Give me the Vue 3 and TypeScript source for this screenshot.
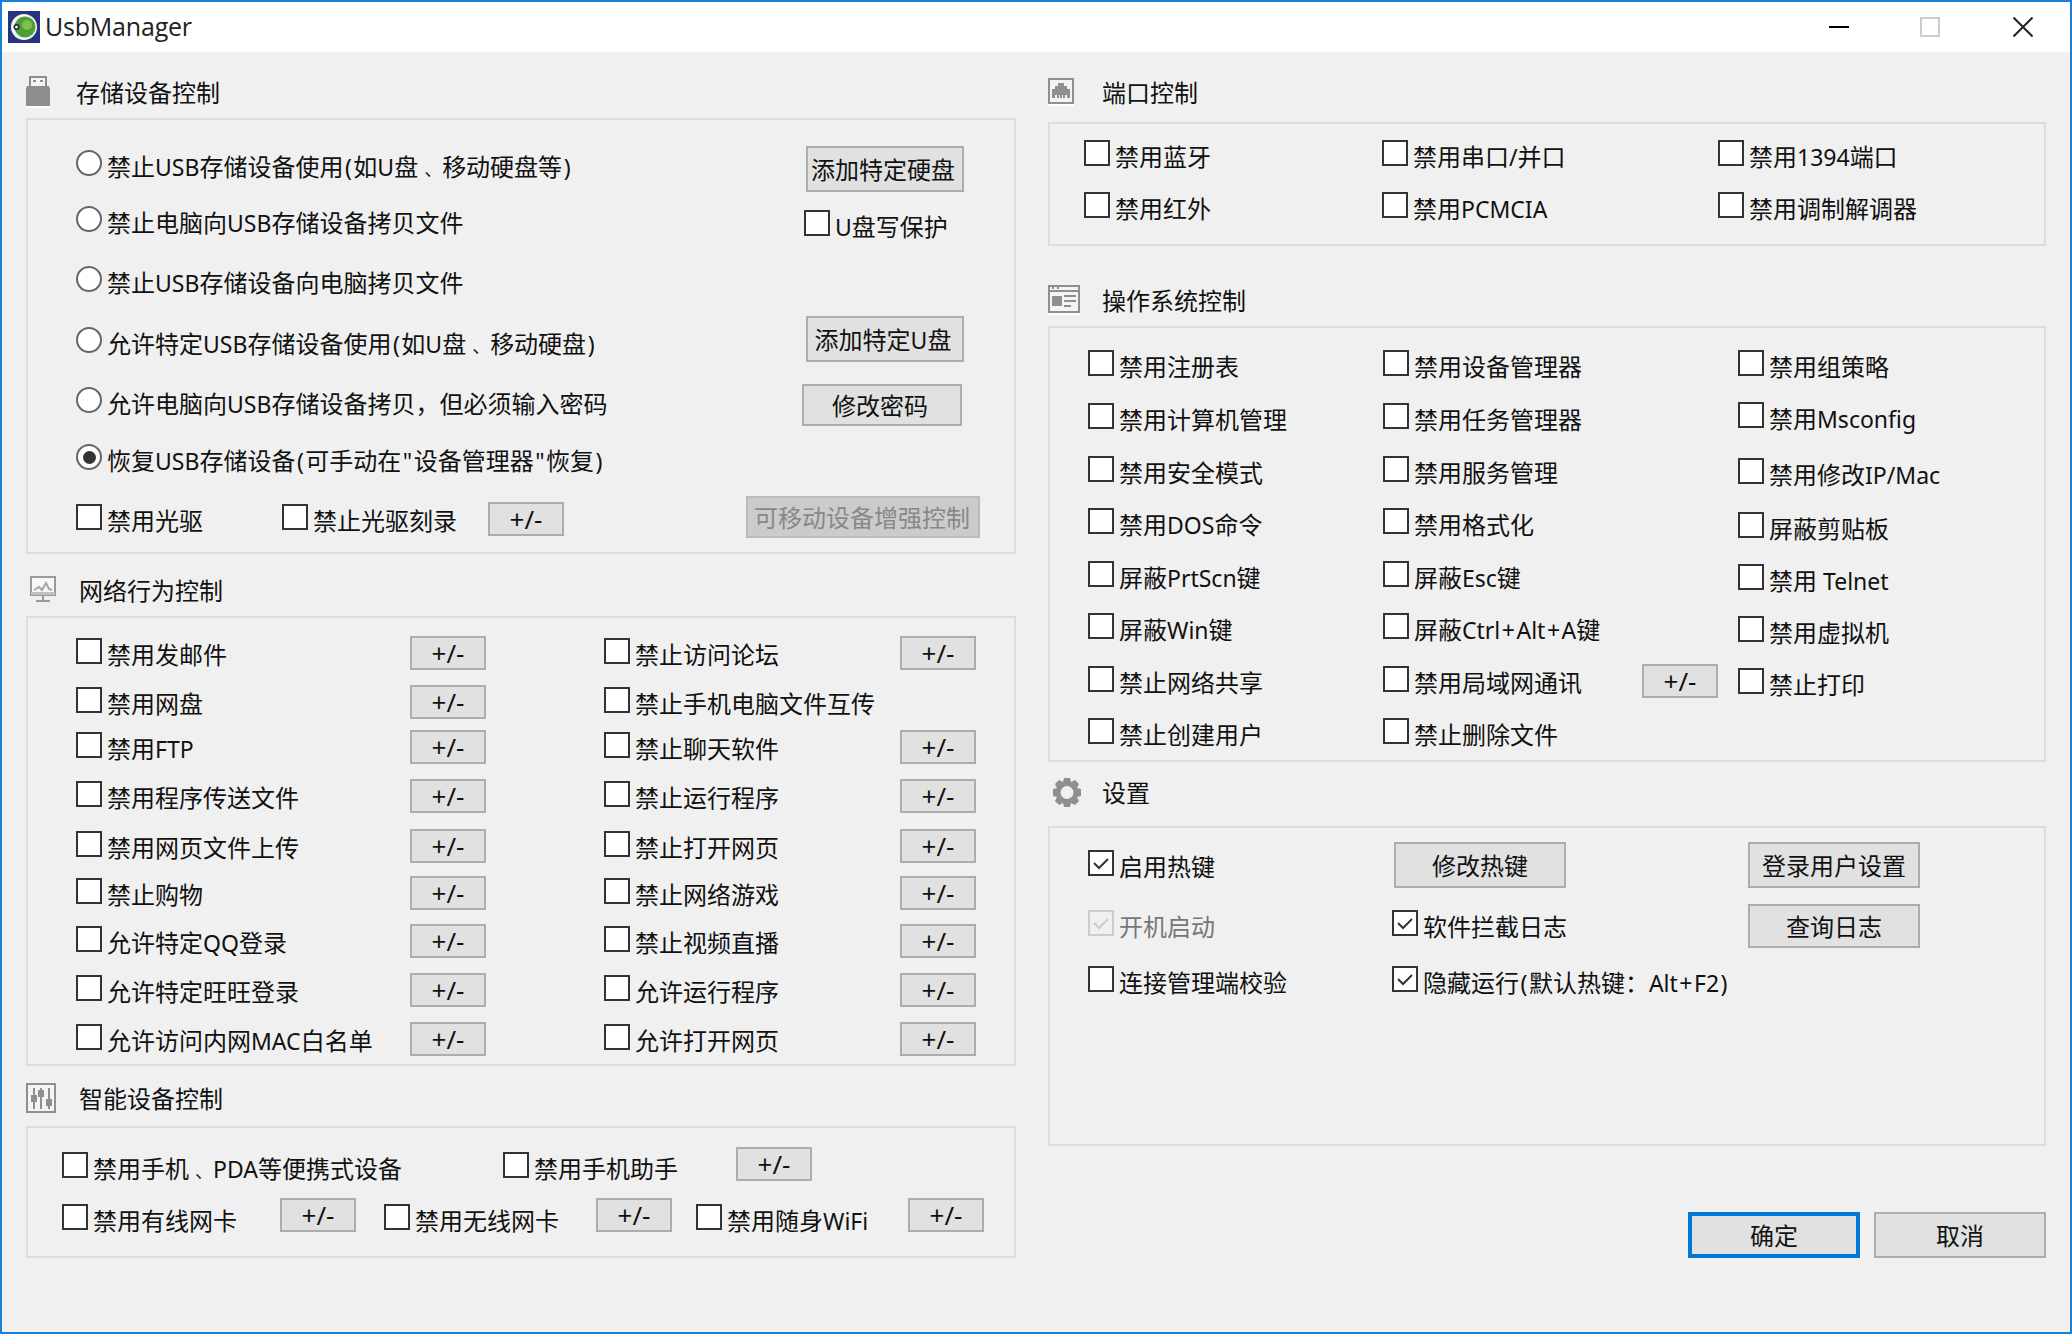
<script setup lang="ts">
interface Item {
  k: 'c' | 'r' | 'b' | 's'
  t?: string
  on?: boolean
  off?: boolean
  cls?: string
}
interface Group {
  cls: string
  items: Item[]
}
interface Section {
  id: string
  icon: string
  title: string
  groups: Group[]
}

const c = (t: string, cls = '', on = false, off = false): Item => ({ k: 'c', t, cls, on, off })
const r = (t: string, on = false): Item => ({ k: 'r', t, on })
const b = (t: string, cls = ''): Item => ({ k: 'b', t, cls })
const pm = (cls = ''): Item => b('+/-', 'pm ' + cls)
const s: Item = { k: 's' }

const pair = (x: string, y: string, rightBtn = true): Item[] => [c(x), pm(), c(y), rightBtn ? pm() : s]

const leftSections: Section[] = [
  {
    id: 'storage',
    icon: 'usb',
    title: '存储设备控制',
    groups: [
      {
        cls: 'radios',
        items: [
          r('禁止USB存储设备使用(如U盘、移动硬盘等)'),
          r('禁止电脑向USB存储设备拷贝文件'),
          r('禁止USB存储设备向电脑拷贝文件'),
          r('允许特定USB存储设备使用(如U盘、移动硬盘)'),
          r('允许电脑向USB存储设备拷贝，但必须输入密码'),
          r('恢复USB存储设备(可手动在"设备管理器"恢复)', true),
        ],
      },
      {
        cls: 'side',
        items: [
          b('添加特定硬盘', 'w158 ml2 h46 pr4'),
          c('U盘写保护'),
          b('添加特定U盘', 'w158 ml2 h46 pr4'),
          b('修改密码', 'w160 mln2 h42 pr4'),
        ],
      },
      {
        cls: 'drive',
        items: [
          c('禁用光驱', 'mt8'),
          c('禁止光驱刻录', 'mt8'),
          pm('mt6'),
          b('可移动设备增强控制', 'dis'),
        ],
      },
    ],
  },
  {
    id: 'network',
    icon: 'monitor',
    title: '网络行为控制',
    groups: [
      {
        cls: 'net',
        items: [
          ...pair('禁用发邮件', '禁止访问论坛'),
          ...pair('禁用网盘', '禁止手机电脑文件互传', false),
          ...pair('禁用FTP', '禁止聊天软件'),
          ...pair('禁用程序传送文件', '禁止运行程序'),
          ...pair('禁用网页文件上传', '禁止打开网页'),
          ...pair('禁止购物', '禁止网络游戏'),
          ...pair('允许特定QQ登录', '禁止视频直播'),
          ...pair('允许特定旺旺登录', '允许运行程序'),
          ...pair('允许访问内网MAC白名单', '允许打开网页'),
        ],
      },
    ],
  },
  {
    id: 'smart',
    icon: 'sliders',
    title: '智能设备控制',
    groups: [
      {
        cls: 'smart1',
        items: [c('禁用手机、PDA等便携式设备', 'mt5'), c('禁用手机助手', 'mt5'), pm()],
      },
      {
        cls: 'smart2',
        items: [
          c('禁用有线网卡', 'mt6'),
          pm(),
          c('禁用无线网卡', 'mt6'),
          pm(),
          c('禁用随身WiFi', 'mt6'),
          pm(),
        ],
      },
    ],
  },
]

const rightSections: Section[] = [
  {
    id: 'port',
    icon: 'port',
    title: '端口控制',
    groups: [
      {
        cls: 'ports',
        items: [
          c('禁用蓝牙'),
          c('禁用串口/并口'),
          c('禁用1394端口'),
          c('禁用红外'),
          c('禁用PCMCIA'),
          c('禁用调制解调器'),
        ],
      },
    ],
  },
  {
    id: 'os',
    icon: 'window',
    title: '操作系统控制',
    groups: [
      {
        cls: 'os1',
        items: ['禁用注册表', '禁用计算机管理', '禁用安全模式', '禁用DOS命令', '屏蔽PrtScn键', '屏蔽Win键', '禁止网络共享', '禁止创建用户'].map((t) => c(t)),
      },
      {
        cls: 'os2',
        items: [
          c('禁用设备管理器'), s,
          c('禁用任务管理器'), s,
          c('禁用服务管理'), s,
          c('禁用格式化'), s,
          c('屏蔽Esc键'), s,
          c('屏蔽Ctrl+Alt+A键'), s,
          c('禁用局域网通讯'), pm('up2'),
          c('禁止删除文件'), s,
        ],
      },
      {
        cls: 'os3',
        items: ['禁用组策略', '禁用Msconfig', '禁用修改IP/Mac', '屏蔽剪贴板', '禁用 Telnet', '禁用虚拟机', '禁止打印'].map((t) => c(t)),
      },
    ],
  },
  {
    id: 'settings',
    icon: 'gear',
    title: '设置',
    groups: [
      {
        cls: 'set',
        items: [
          c('启用热键', 'mt8', true),
          b('修改热键', 'w172 ml2 h46'),
          b('登录用户设置', 'w172 h46'),
          c('开机启动', 'mt6', true, true),
          c('软件拦截日志', 'mt6', true),
          b('查询日志', 'w172 h44'),
          c('连接管理端校验'),
          c('隐藏运行(默认热键：Alt+F2)', '', true),
        ],
      },
    ],
  },
]

const columns = [
  { id: 'left', sections: leftSections },
  { id: 'right', sections: rightSections },
]

// Latin runs are set in a smaller face than the CJK text around them;
// brackets, quotes, plus signs and the enumeration comma get their own spacing.
const segs = (text = '') =>
  (text.match(/[()"+]|、|[A-Za-z0-9\-/:. ]+|[^A-Za-z0-9\-/:.()"+ 、]+/g) ?? []).map((x) => ({
    x,
    cls: /^[()"+]/.test(x)
      ? 'lat par'
      : x === '、'
        ? 'dun'
        : /^[A-Za-z0-9\-/:. ]/.test(x)
          ? 'lat'
          : '',
  }))
</script>

<template>
  <div class="win">
    <header class="bar">
      <svg class="logo" viewBox="0 0 32 32">
        <rect width="32" height="32" fill="#27337f" />
        <circle cx="16" cy="16" r="13" fill="#f4f6f2" />
        <circle cx="17" cy="16" r="10.500" fill="#4f9e35" />
        <circle cx="19" cy="14" r="5" fill="#7cc04e" />
        <circle cx="8.500" cy="16" r="3" fill="#17232a" />
        <circle cx="8.500" cy="16" r="1.500" fill="#e8efe4" />
      </svg>
      <span class="title">UsbManager</span>
      <span class="ctl min"></span>
      <span class="ctl max"></span>
      <svg class="ctl close" viewBox="0 0 20 20"><path d="M.5.5l19 19M19.500.5l-19 19" stroke="#222" stroke-width="2" fill="none" /></svg>
    </header>

    <div class="content">
      <div v-for="col in columns" :key="col.id" :class="['col', col.id]">
        <section v-for="sec in col.sections" :key="sec.id" :class="sec.id">
          <div class="head">
            <span class="slot">
              <svg v-if="sec.icon === 'usb'" width="24" height="32" viewBox="0 0 24 32">
                <path d="M3 0h18v11H3z" fill="#8d8d8d" />
                <path d="M5 2h14v9H5z" fill="#f4f4f4" />
                <path d="M7 4h3v2H7zM14 4h3v2h-3z" fill="#8d8d8d" />
                <path d="M1 10h22l1 3v17H0V13z" fill="#8d8d8d" />
                <path d="M0 30h24v2H0z" fill="#fff" />
              </svg>
              <svg v-else-if="sec.icon === 'monitor'" width="26" height="28" viewBox="0 0 26 28">
                <path d="M1 1h24v18H1z" fill="#f7f7f7" stroke="#9a9a9a" stroke-width="2" />
                <path d="M4 14l5-3 3 3 4-7 3 6 3 1" fill="none" stroke="#a5a5a5" stroke-width="2" />
                <path d="M1 16h24v3H1z" fill="#c0c0c0" />
                <path d="M12 20h2v4h-2zM6 24h14v2H6z" fill="#9a9a9a" />
              </svg>
              <svg v-else-if="sec.icon === 'sliders'" width="30" height="30" viewBox="0 0 30 30">
                <path d="M1 1h28v28H1z" fill="#f4f4f4" stroke="#8f8f8f" stroke-width="2" />
                <path d="M7 5h2v21H7zM14 5h2v21h-2zM22 5h2v21h-2z" fill="#8f8f8f" />
                <path d="M5 12h6v7H5zM12 7h6v7h-6zM20 16h6v7h-6z" fill="#8f8f8f" />
              </svg>
              <svg v-else-if="sec.icon === 'port'" width="26" height="28" viewBox="0 0 26 28">
                <path d="M1 1h24v24H1z" fill="#f4f4f4" stroke="#8f8f8f" stroke-width="2" />
                <path d="M10 5h6v3h3v3h3v9H4v-9h3V8h3z" fill="#8f8f8f" />
                <path d="M7 17h2v3H7zM11 17h1v3h-1zM14 17h1v3h-1zM17 17h2v3h-2z" fill="#f4f4f4" />
                <path d="M0 26h26v2H0z" fill="#fff" />
              </svg>
              <svg v-else-if="sec.icon === 'window'" width="32" height="30" viewBox="0 0 32 30">
                <path d="M1 1h30v26H1z" fill="#f4f4f4" stroke="#8f8f8f" stroke-width="2" />
                <path d="M1 5h30v2H1zM4 2h2v2H4zM9 2h2v2H9z" fill="#8f8f8f" />
                <path d="M4 11h10v10H4zM16 10h12v2H16zM16 15h12v2H16zM16 20h7v2h-7z" fill="#8f8f8f" />
                <path d="M0 28h32v2H0z" fill="#fff" />
              </svg>
              <svg v-else width="30" height="31" viewBox="0 0 30 31">
                <path d="M12 1h6l1 4 4-2 4 4-2 4 4 1v7l-4 1 2 4-4 4-4-2-1 4h-6l-1-4-4 2-4-4 2-4-4-1v-7l4-1-2-4 4-4 4 2z" fill="#8f8f8f" />
                <circle cx="15" cy="15.500" r="6.500" fill="#f0f0f0" />
              </svg>
            </span>
            <span class="cap">{{ sec.title }}</span>
          </div>
          <div class="box">
            <div v-for="g in sec.groups" :key="g.cls" :class="g.cls">
              <template v-for="(it, i) in g.items" :key="i">
                <button v-if="it.k === 'b'" type="button" :class="['btn', it.cls]">
                  <span v-for="(p, j) in segs(it.t)" :key="j" :class="p.cls">{{ p.x }}</span>
                </button>
                <div v-else-if="it.k === 's'"></div>
                <div v-else :class="['ck', it.cls, { off: it.off }]">
                  <span v-if="it.k === 'r'" :class="['radio', { on: it.on }]"></span>
                  <span v-else class="cb">
                    <svg v-if="it.on" viewBox="0 0 22 22"><path d="M4 11l5 5 9-9" fill="none" stroke="currentColor" stroke-width="2" /></svg>
                  </span>
                  <span class="txt"><span v-for="(p, j) in segs(it.t)" :key="j" :class="p.cls">{{ p.x }}</span></span>
                </div>
              </template>
            </div>
          </div>
        </section>
        <footer v-if="col.id === 'right'" class="foot">
          <button type="button" class="btn w172 h46 ok">确定</button>
          <button type="button" class="btn w172 h46">取消</button>
        </footer>
      </div>
    </div>
  </div>
</template>

<style scoped>
.win {
  width: 2072px;
  height: 1334px;
  box-sizing: border-box;
  border: 2px solid #1a7fd8;
  background: #f0f0f0;
  font-family: "Noto Sans CJK SC", "Noto Sans", sans-serif;
  font-size: 24px;
  color: #111;
  overflow: hidden;
}
.bar {
  height: 50px;
  background: #fff;
  display: flex;
  align-items: center;
  padding-left: 6px;
}
.logo {
  width: 32px;
  height: 32px;
  margin-right: 5px;
}
.title {
  font-family: "Open Sans", sans-serif;
  font-size: 25px;
  line-height: 30px;
  padding-bottom: 2px;
  letter-spacing: -0.2px;
  color: #222;
  flex: 1;
}
.ctl {
  display: block;
  box-sizing: border-box;
  width: 20px;
  height: 20px;
}
.min {
  height: 2px;
  background: #000;
  margin-right: 71px;
}
.max {
  border: 2px solid #ccc;
  margin-right: 73px;
}
.close {
  margin-right: 37px;
}
.content {
  display: flex;
  gap: 32px;
  padding-left: 24px;
}
.left {
  width: 990px;
}
.right {
  width: 998px;
}
.head {
  display: flex;
  align-items: flex-start;
  box-sizing: border-box;
  line-height: 32px;
}
.slot {
  display: flex;
  align-items: center;
  height: 32px;
}
.cap {
  line-height: 32px;
}
.box {
  box-sizing: border-box;
  border: 2px solid #dcdcdc;
}
.storage .head { height: 66px; padding-top: 24px; }
.network .head { height: 62px; padding-top: 20px; }
.smart .head { height: 60px; padding-top: 16px; }
.port .head { height: 70px; padding-top: 24px; }
.os .head { height: 80px; padding-top: 38px; }
.settings .head { height: 64px; padding-top: 14px; }
.storage .slot { width: 50px; }
.network .slot { width: 53px; padding-left: 4px; box-sizing: border-box; }
.smart .slot { width: 53px; }
.port .slot, .os .slot { width: 54px; }
.settings .slot { width: 54px; padding-left: 4px; box-sizing: border-box; }

.storage .box { height: 436px; display: flex; flex-wrap: wrap; padding: 30px 0 0 48px; align-content: flex-start; }
.radios {
  width: 728px;
  display: grid;
  grid-template-rows: 56px 60px 61px 60px 57px 52px;
}
.side {
  width: 180px;
  height: 340px;
  margin-top: -4px;
  display: grid;
  grid-template-rows: 64px 106px 68px 42px;
}
.drive {
  width: 100%;
  display: grid;
  grid-template-columns: 206px 206px 258px auto;
}
.network .box { height: 450px; padding: 18px 0 0 48px; }
.net {
  display: grid;
  grid-template-columns: 334px 194px 296px 76px;
  grid-template-rows: 49px 45px 49px 50px 47px 48px 49px 49px 34px;
}
.net .ck { margin-top: 2px; }
.smart .box { height: 132px; padding: 19px 0 0 34px; }
.smart1 {
  display: grid;
  grid-template-columns: 441px 233px 76px;
  height: 51px;
}
.smart2 {
  display: grid;
  grid-template-columns: 218px 104px 212px 100px 212px 76px;
}
.port .box { height: 124px; padding: 16px 0 0 34px; }
.ports {
  display: grid;
  grid-template-columns: 298px 336px auto;
  grid-template-rows: 52px 52px;
}
.os .box { height: 436px; padding: 22px 0 0 38px; display: flex; }
.os1 { width: 295px; display: grid; grid-template-rows: 53px 53px 52px 53px 52px 53px 52px 36px; }
.os2 { width: 355px; display: grid; grid-template-columns: 259px 76px; grid-template-rows: 53px 53px 52px 53px 52px 53px 52px 36px; }
.os3 { display: grid; grid-template-rows: 52px 56px 54px 52px 52px 52px 36px; }
.settings .box { height: 320px; padding: 14px 0 0 38px; }
.set {
  display: grid;
  grid-template-columns: 304px 356px auto;
  grid-template-rows: 62px 62px 34px;
}
.foot {
  display: flex;
  justify-content: flex-end;
  gap: 14px;
  margin-top: 66px;
}

.ck {
  display: flex;
  align-items: flex-start;
  gap: 5px;
  height: 32px;
  white-space: nowrap;
}
.cb {
  flex: none;
  box-sizing: border-box;
  width: 26px;
  height: 26px;
  border: 2px solid #333;
  background: #fff;
  color: #333;
}
.cb svg {
  display: block;
  width: 22px;
  height: 22px;
}
.radio {
  flex: none;
  box-sizing: border-box;
  width: 26px;
  height: 26px;
  border: 2px solid #666;
  border-radius: 50%;
  background: #fff;
  position: relative;
}
.radio.on::after {
  content: "";
  position: absolute;
  inset: 4.5px;
  border-radius: 50%;
  background: #333;
}
.txt {
  line-height: 32px;
}
.off {
  color: #777;
}
.off .cb {
  border-color: #ccc;
  color: #ccc;
  background: #f0f0f0;
}
.lat {
  font-family: "Noto Sans", sans-serif;
  font-size: 23px;
}
.par {
  padding: 0 1.5px;
}
.dun {
  font-size: 18px;
  padding-left: 6px;
}
.btn {
  display: block;
  padding: 0;
  box-sizing: border-box;
  border: 2px solid #adadad;
  background: #e1e1e1;
  font: inherit;
  color: inherit;
  line-height: 1;
  text-align: center;
  white-space: nowrap;
}
.pm {
  width: 76px;
  height: 34px;
  line-height: 28px;
}
.pm .lat {
  font-size: 26px;
  padding: 0;
}
.w158 { width: 158px; }
.w160 { width: 160px; }
.w172 { width: 172px; }
.h46 { height: 46px; }
.h44 { height: 44px; }
.h42 { height: 42px; }
.ml2 { margin-left: 2px; }
.mln2 { margin-left: -2px; }
.pr4 { padding-right: 4px; }
.mt5 { margin-top: 5px; }
.mt6 { margin-top: 6px; }
.mt8 { margin-top: 8px; }
.up2 { margin-top: -2px; }
.dis {
  width: 234px;
  height: 42px;
  padding-right: 2px;
  background: #cbcbcb;
  border-color: #bbb;
  color: #888;
}
.ok {
  border: 4px solid #0078d7;
}
</style>

<style>
html, body {
  margin: 0;
  background: #f0f0f0;
}
</style>
